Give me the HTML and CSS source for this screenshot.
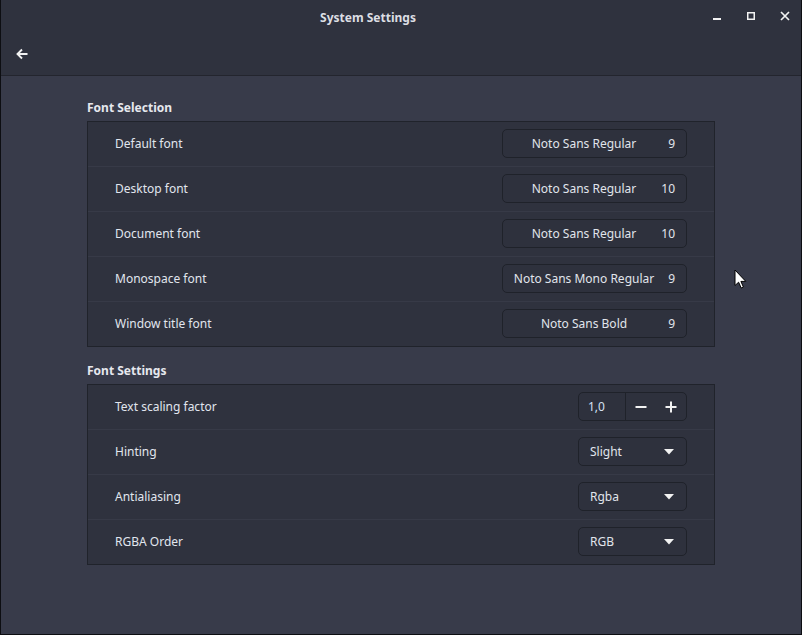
FILE: index.html
```html
<!DOCTYPE html>
<html>
<head>
<meta charset="utf-8">
<link rel="stylesheet" href="styles.css">
</head>
<body>
<div class="window">
  <header class="header">
    <div class="titlebar">
      <div class="title">System Settings</div>
      <div class="wm">
        <svg class="wm-btn" width="12" height="12" viewBox="0 0 12 12"><rect x="2" y="7" width="8" height="2" fill="#f2f2f2"/></svg>
        <svg class="wm-btn" width="12" height="12" viewBox="0 0 12 12"><rect x="2.75" y="1.75" width="6.5" height="6.5" fill="none" stroke="#f2f2f2" stroke-width="1.5"/></svg>
        <svg class="wm-btn" width="12" height="12" viewBox="0 0 12 12"><path d="M2 1 L10 9 M10 1 L2 9" stroke="#f2f2f2" stroke-width="1.7"/></svg>
      </div>
    </div>
    <div class="toolbar">
      <svg class="back" width="14" height="12" viewBox="0 0 14 12"><path d="M12.5 6 H2.5 M7 1.5 L2.5 6 L7 10.5" fill="none" stroke="#f2f2f2" stroke-width="1.9"/></svg>
    </div>
  </header>
  <main class="content">
    <section class="section">
      <h2 class="section-title">Font Selection</h2>
      <div class="panel">
        <div class="row"><span class="label">Default font</span><div class="font-btn"><span class="fname">Noto Sans Regular</span><span class="fsize">9</span></div></div>
        <div class="row"><span class="label">Desktop font</span><div class="font-btn"><span class="fname">Noto Sans Regular</span><span class="fsize">10</span></div></div>
        <div class="row"><span class="label">Document font</span><div class="font-btn"><span class="fname">Noto Sans Regular</span><span class="fsize">10</span></div></div>
        <div class="row"><span class="label">Monospace font</span><div class="font-btn"><span class="fname">Noto Sans Mono Regular</span><span class="fsize">9</span></div></div>
        <div class="row"><span class="label">Window title font</span><div class="font-btn"><span class="fname">Noto Sans Bold</span><span class="fsize">9</span></div></div>
      </div>
    </section>
    <section class="section second">
      <h2 class="section-title">Font Settings</h2>
      <div class="panel">
        <div class="row"><span class="label">Text scaling factor</span>
          <div class="spin">
            <span class="spin-value">1,0</span>
            <span class="spin-btn"><svg width="12" height="12" viewBox="0 0 12 12"><rect x="0.5" y="5" width="11" height="2" fill="#f2f2f2"/></svg></span>
            <span class="spin-btn"><svg width="12" height="12" viewBox="0 0 12 12"><rect x="0.5" y="5" width="11" height="2" fill="#f2f2f2"/><rect x="5" y="0.5" width="2" height="11" fill="#f2f2f2"/></svg></span>
          </div>
        </div>
        <div class="row"><span class="label">Hinting</span><div class="combo"><span>Slight</span><svg width="10" height="6" viewBox="0 0 10 6"><path d="M0 0 H10 L5 5.5 Z" fill="#f2f2f2"/></svg></div></div>
        <div class="row"><span class="label">Antialiasing</span><div class="combo"><span>Rgba</span><svg width="10" height="6" viewBox="0 0 10 6"><path d="M0 0 H10 L5 5.5 Z" fill="#f2f2f2"/></svg></div></div>
        <div class="row"><span class="label">RGBA Order</span><div class="combo"><span>RGB</span><svg width="10" height="6" viewBox="0 0 10 6"><path d="M0 0 H10 L5 5.5 Z" fill="#f2f2f2"/></svg></div></div>
      </div>
    </section>
  </main>
  <svg class="cursor" width="14" height="22" viewBox="0 0 14 22"><path d="M1 1 V16.5 L4.6 13.2 L7.2 19 L9.4 18 L6.9 12.4 L11.8 12.4 Z" fill="#ffffff" stroke="#000" stroke-width="1"/></svg>
</div>
</body>
</html>
```
FILE: styles.css
```css
* { box-sizing: border-box; }
html, body { margin: 0; padding: 0; }
body {
  width: 802px;
  height: 635px;
  background: #383b4a;
  font-family: "Noto Sans", "DejaVu Sans", sans-serif;
  color: #e1e5ec;
  overflow: hidden;
}
.window {
  position: relative;
  width: 802px;
  height: 635px;
  border: 1px solid #0d0e12;
  border-top: none;
  background: #383b4a;
  display: flex;
  flex-direction: column;
}
.header {
  background: #2f323e;
  border-bottom: 1px solid #23252e;
  height: 76px;
  display: flex;
  flex-direction: column;
}
.titlebar {
  height: 35px;
  display: flex;
  align-items: center;
  justify-content: center;
  position: relative;
  padding-right: 66px;
}
.title {
  font-weight: bold;
  font-size: 12px;
  color: #dcdee3;
  white-space: nowrap;
}
.wm {
  position: absolute;
  right: 10px;
  top: 11px;
  display: flex;
  gap: 22px;
}
.wm-btn { display: block; }
.toolbar {
  height: 40px;
  display: flex;
  align-items: center;
  padding-left: 14px;
}
.back { display: block; margin-top: -2px; }
.content {
  flex: 1;
  padding: 23px 86px 0 86px;
}
.section-title {
  margin: 0 0 4px 0;
  font-size: 12px;
  line-height: 18px;
  font-weight: bold;
  color: #e6e8ee;
}
.second { margin-top: 15px; }
.panel {
  background: #2f323e;
  border: 1px solid #20232b;
}
.row {
  height: 45px;
  display: flex;
  align-items: center;
  justify-content: space-between;
  padding: 0 27px 1px 27px;
  border-bottom: 1px solid #373a47;
}
.row:last-child { border-bottom: none; height: 44px; }
.label { font-size: 12px; color: #e1e6ee; white-space: nowrap; }
.font-btn {
  width: 185px;
  height: 29px;
  border: 1px solid #1f222a;
  border-radius: 5px;
  background: #2e313d;
  display: flex;
  align-items: center;
  padding: 0 11px 0 8px;
  font-size: 12px;
  white-space: nowrap;
}
.fname { flex: 1; text-align: center; }
.fsize { min-width: 14px; text-align: right; margin-left: 4px; }
.spin {
  width: 109px;
  height: 29px;
  border: 1px solid #1f222a;
  border-radius: 5px;
  background: #2e313d;
  display: flex;
  align-items: center;
  font-size: 12px;
}
.spin-value {
  width: 47px;
  height: 100%;
  display: flex;
  align-items: center;
  padding-left: 9px;
  border-right: 1px solid #1f222a;
  color: #d6e2f2;
}
.spin-btn {
  flex: 1;
  display: flex;
  justify-content: center;
  align-items: center;
}
.spin-btn svg { display: block; }
.combo {
  width: 109px;
  height: 29px;
  border: 1px solid #1f222a;
  border-radius: 5px;
  background: #2e313d;
  display: flex;
  align-items: center;
  justify-content: space-between;
  padding: 0 12px 0 11px;
  font-size: 12px;
}
.combo svg { display: block; }
.cursor {
  position: absolute;
  left: 733px;
  top: 269px;
}
```
